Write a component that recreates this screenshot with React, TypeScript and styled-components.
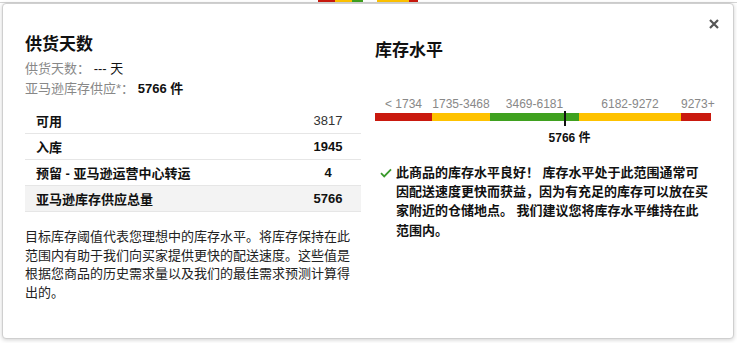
import styled, { createGlobalStyle } from "styled-components";

const GlobalStyle = createGlobalStyle`
    html, body {
        margin: 0;
        padding: 0;
        background: #ffffff;
    }
    body {
        font-family: "Liberation Sans", "Noto Sans CJK SC", sans-serif;
        color: #111;
    }
`

const Page = styled.div`
    width: 737px;
    height: 343px;
    position: relative;
    overflow: hidden;
    background: #fff;
`

const TopStrip = styled.div`
    display: flex;
    height: 3px;
    border-bottom: 1px solid #d5d5d5;
    box-sizing: border-box;
    padding-left: 318px;
`

const StripBar = styled.div<{ $color: string; $w: number; $gap?: number }>`
    width: ${(p) => p.$w}px;
    margin-right: ${(p) => p.$gap ?? 0}px;
    height: 2px;
    background: ${(p) => p.$color};
`

const Popup = styled.div`
    position: absolute;
    top: 3px;
    left: 2px;
    width: 732px;
    height: 336px;
    box-sizing: border-box;
    background: #fff;
    border: 1px solid #cfcfcf;
    border-radius: 4px;
    box-shadow: 0 1px 4px rgba(0, 0, 0, 0.18);
    padding: 29px 22px 0 22px;
    display: grid;
    grid-template-columns: 336px 336px;
    column-gap: 14px;
`

const CloseButton = styled.button`
    position: absolute;
    top: 11px;
    right: 10px;
    width: 18px;
    height: 18px;
    padding: 0;
    border: none;
    background: transparent;
    display: flex;
    align-items: center;
    justify-content: center;
    cursor: pointer;
`

const Column = styled.div<{ $offset?: number }>`
    display: flex;
    flex-direction: column;
    padding-top: ${(p) => p.$offset ?? 0}px;
`

const Title = styled.h2`
    margin: 0;
    font-size: 17px;
    line-height: 24px;
    font-weight: 700;
    color: #111;
`

const InfoList = styled.div`
    margin-top: 2px;
    display: flex;
    flex-direction: column;
`

const InfoRow = styled.div`
    font-size: 13px;
    line-height: 20px;
    color: #111;
`

const InfoLabel = styled.span`
    color: #888;
`

const InfoValue = styled.span<{ $bold?: boolean }>`
    font-weight: ${(p) => (p.$bold ? 700 : 400)};
`

const Table = styled.div`
    margin-top: 9px;
    display: flex;
    flex-direction: column;
`

const TableRow = styled.div<{ $total?: boolean }>`
    display: flex;
    align-items: center;
    height: 26px;
    box-sizing: border-box;
    padding-left: 11px;
    border-bottom: 1px solid #e6e6e6;
    background: ${(p) => (p.$total ? "#f3f3f3" : "transparent")};
    font-size: 13px;
`

const RowLabel = styled.div`
    flex: 1;
    font-weight: 700;
    color: #111;
`

const RowValue = styled.div<{ $bold?: boolean }>`
    width: 66px;
    text-align: center;
    font-weight: ${(p) => (p.$bold ? 700 : 400)};
    color: ${(p) => (p.$bold ? "#111" : "#333")};
`

const Note = styled.p`
    margin: 16px 0 0 0;
    font-size: 13px;
    line-height: 18.5px;
    color: #222;
`

const ScaleLabels = styled.div`
    margin-top: 33px;
    display: flex;
    height: 16px;
`

const ScaleLabel = styled.div<{ $w: number }>`
    width: ${(p) => p.$w}px;
    text-align: center;
    font-size: 12px;
    line-height: 16px;
    color: #888;
    white-space: nowrap;
`

const BarWrap = styled.div`
    position: relative;
    margin-top: 1px;
    display: flex;
    height: 8px;
`

const BarSegment = styled.div<{ $w: number; $color: string }>`
    width: ${(p) => p.$w}px;
    height: 8px;
    background: ${(p) => p.$color};
`

const Marker = styled.div`
    position: absolute;
    top: -2px;
    width: 2px;
    height: 15px;
    background: #111;
    transform: translateX(-1px);
`

const MarkerCaption = styled.div`
    position: relative;
    margin-top: 9px;
    height: 16px;
`

const MarkerText = styled.span`
    position: absolute;
    transform: translateX(-40%);
    font-size: 12px;
    line-height: 16px;
    font-weight: 700;
    color: #111;
    white-space: nowrap;
`

const Message = styled.div`
    margin-top: 17px;
    display: flex;
    align-items: flex-start;
    padding-left: 5px;
    gap: 4px;
`

const CheckIcon = styled.svg`
    flex: none;
    margin-top: 5px;
`

const MessageText = styled.div`
    width: 313px;
    font-size: 13px;
    line-height: 19.2px;
    font-weight: 700;
    color: #111;
`

type Segment = {
    label: string
    min: number
    max: number
    width: number
    color: string
}

const segments: Segment[] = [
    { label: "< 1734", min: 0, max: 1734, width: 57, color: "#c9190e" },
    { label: "1735-3468", min: 1735, max: 3468, width: 58, color: "#fec200" },
    { label: "3469-6181", min: 3469, max: 6181, width: 89, color: "#3fa11f" },
    { label: "6182-9272", min: 6182, max: 9272, width: 102, color: "#fec200" },
    { label: "9273+", min: 9273, max: 12000, width: 30, color: "#c9190e" },
]

const supply = 5766

const markerLeft = () => {
    let x = 0;
    for (const s of segments) {
        if (supply <= s.max) {
            return x + ((supply - s.min) / (s.max - s.min)) * s.width;
        }
        x += s.width;
    }
    return x;
}

const rows = [
    { label: "可用", value: "3817", bold: false },
    { label: "入库", value: "1945", bold: true },
    { label: "预留 - 亚马逊运营中心转运", value: "4", bold: true },
]

const App = () => {
    const left = markerLeft();

    return (
        <>
            <GlobalStyle />
            <Page>
                <TopStrip>
                    <StripBar $color="#c9190e" $w={17} />
                    <StripBar $color="#fec200" $w={17} />
                    <StripBar $color="#3fa11f" $w={11} $gap={14} />
                    <StripBar $color="#fec200" $w={32} />
                    <StripBar $color="#c9190e" $w={9} />
                </TopStrip>
                <Popup>
                    <CloseButton aria-label="关闭">
                        <svg width="10" height="10" viewBox="0 0 10 10">
                            <path d="M1 1 L9 9 M9 1 L1 9" stroke="#555" strokeWidth="2.2" strokeLinecap="butt" />
                        </svg>
                    </CloseButton>

                    <Column>
                        <Title>供货天数</Title>
                        <InfoList>
                            <InfoRow>
                                <InfoLabel>供货天数：</InfoLabel> <InfoValue>--- 天</InfoValue>
                            </InfoRow>
                            <InfoRow>
                                <InfoLabel>亚马逊库存供应*：</InfoLabel> <InfoValue $bold>5766 件</InfoValue>
                            </InfoRow>
                        </InfoList>

                        <Table>
                            {rows.map((r) => (
                                <TableRow key={r.label}>
                                    <RowLabel>{r.label}</RowLabel>
                                    <RowValue $bold={r.bold}>{r.value}</RowValue>
                                </TableRow>
                            ))}
                            <TableRow $total>
                                <RowLabel>亚马逊库存供应总量</RowLabel>
                                <RowValue $bold>5766</RowValue>
                            </TableRow>
                        </Table>

                        <Note>
                            目标库存阈值代表您理想中的库存水平。将库存保持在此范围内有助于我们向买家提供更快的配送速度。这些值是根据您商品的历史需求量以及我们的最佳需求预测计算得出的。
                        </Note>
                    </Column>

                    <Column $offset={6}>
                        <Title>库存水平</Title>
                        <ScaleLabels>
                            {segments.map((s) => (
                                <ScaleLabel key={s.label} $w={s.width}>{s.label}</ScaleLabel>
                            ))}
                        </ScaleLabels>
                        <BarWrap>
                            {segments.map((s) => (
                                <BarSegment key={s.label} $w={s.width} $color={s.color} />
                            ))}
                            <Marker style={{ left: `${left}px` }} />
                        </BarWrap>
                        <MarkerCaption>
                            <MarkerText style={{ left: `${left}px` }}>5766 件</MarkerText>
                        </MarkerCaption>

                        <Message>
                            <CheckIcon width="12" height="10" viewBox="0 0 12 10">
                                <path d="M1 5.2 L4.2 8.4 L11 1.4" fill="none" stroke="#3a9a2c" strokeWidth="1.8" />
                            </CheckIcon>
                            <MessageText>
                                此商品的库存水平良好！ 库存水平处于此范围通常可因配送速度更快而获益，因为有充足的库存可以放在买家附近的仓储地点。 我们建议您将库存水平维持在此范围内。
                            </MessageText>
                        </Message>
                    </Column>
                </Popup>
            </Page>
        </>
    )
}

export default App;
